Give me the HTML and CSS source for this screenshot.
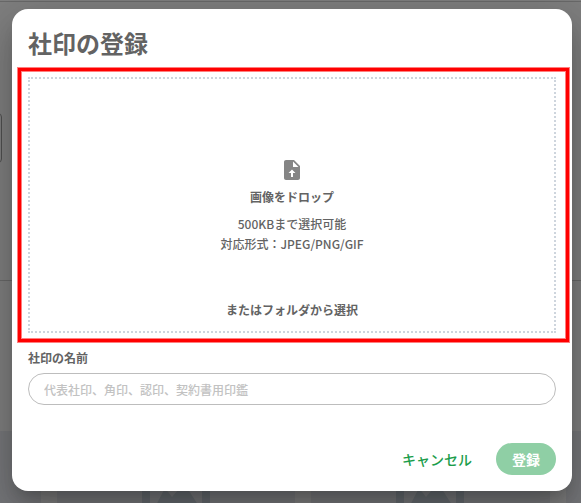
FILE: index.html
```html
<!DOCTYPE html>
<html lang="ja">
<head>
<meta charset="utf-8">
<title>社印の登録</title>
<link rel="stylesheet" href="styles.css">
</head>
<body>
<div class="page" aria-hidden="true">
  <div class="page-header"></div>
  <div class="page-body"><div class="page-button"></div></div>
  <div class="page-list">
    <div class="cards">
      <div class="card"></div>
      <div class="card"><svg class="thumb" viewBox="0 0 68 60"><path d="M0 0h68v60H0zM8 8v52h52V8z" fill-rule="evenodd"/><path d="M11 60L23 37l7 9L42 32l18 28z"/></svg></div>
      <div class="card"><svg class="thumb" viewBox="0 0 68 60"><path d="M0 0h68v60H0zM8 8v52h52V8z" fill-rule="evenodd"/><path d="M11 60L23 37l7 9L42 32l18 28z"/></svg></div>
      <div class="card"></div>
    </div>
  </div>
</div>
<div class="backdrop">
  <div class="dialog" role="dialog">
    <h1 class="title">社印の登録</h1>
    <div class="dropzone">
      <svg class="file-icon" viewBox="0 0 24 24"><path d="M14 2H6c-1.1 0-2 .9-2 2v16c0 1.1.9 2 2 2h12c1.1 0 2-.9 2-2V8l-6-6zm-1 7V3.500L18.500 9H13zM12 11.500L15.500 15H13v4h-2v-4H8.500z"/></svg>
      <p class="drop-title">画像をドロップ</p>
      <p class="drop-note">500KBまで選択可能<br>対応形式：JPEG/PNG/GIF</p>
      <p class="drop-pick">またはフォルダから選択</p>
      <div class="highlight"></div>
    </div>
    <label class="label" for="name">社印の名前</label>
    <input class="input" id="name" type="text" placeholder="代表社印、角印、認印、契約書用印鑑">
    <div class="actions">
      <button class="cancel">キャンセル</button>
      <button class="submit">登録</button>
    </div>
  </div>
</div>
</body>
</html>
```
FILE: styles.css
```css
* { box-sizing: border-box; }
body {
  margin: 0;
  height: 503px;
  overflow: hidden;
  position: relative;
  font-family: "Noto Sans CJK JP", sans-serif;
  color: #636363;
}
.page { height: 503px; display: flex; flex-direction: column; background: #fff; }
.page-header { height: 2px; border-bottom: 1px solid #d2d2d2; }
.page-body { height: 279px; padding-top: 111px; border-bottom: 1px solid #d2d2d2; }
.page-button {
  width: 12px;
  height: 50px;
  margin-left: -10px;
  border: 1px solid #a0a0a0;
  border-radius: 4px;
}
.page-list { padding-top: 150px; background: #fff; }
.cards { display: grid; grid-template-columns: 41px 238px 239px 15px; gap: 16px; height: 72px; }
.card { background: #eceff4; overflow: hidden; }
.thumb { display: block; width: 68px; height: 60px; margin: 20px 0 0 85px; fill: #cbd5de; }
.backdrop {
  position: absolute;
  inset: 0;
  padding: 9px 9px 12px 12px;
  background: rgba(0, 0, 0, .5);
}
.dialog {
  height: 482px;
  padding: 16px;
  border-radius: 16px;
  background: #fff;
  box-shadow: 0 11px 15px -7px rgba(0,0,0,.2), 0 24px 38px 3px rgba(0,0,0,.14), 0 9px 46px 8px rgba(0,0,0,.12);
}
.title { margin: 0 0 16px; font-size: 24px; line-height: 36px; font-weight: 700; }
.dropzone {
  position: relative;
  height: 256px;
  padding-top: 79px;
  border: 2px dotted #ced5dd;
  text-align: center;
  font-size: 12px;
  line-height: 20px;
  font-weight: 500;
}
.file-icon { display: block; width: 24px; height: 24px; margin: 0 auto; fill: #858585; }
.dropzone p { margin: 0; }
.dropzone .drop-title { padding-top: 5px; font-weight: 700; }
.dropzone .drop-note { margin-top: 7px; }
.dropzone .drop-pick { margin-top: 46px; font-weight: 700; }
.highlight {
  position: absolute;
  inset: -11px -15px -11px -12px;
  border: 3px solid #f00;
  box-shadow: 0 0 0 1px rgba(255,0,0,.5), inset 0 0 0 1px rgba(255,0,0,.5);
  pointer-events: none;
}
.label { display: block; margin-top: 15px; font-size: 12px; line-height: 20px; font-weight: 700; }
.input {
  display: block;
  width: 100%;
  height: 32px;
  margin-top: 5px;
  padding: 0 15px;
  border: 1px solid #bdbdbd;
  border-radius: 16px;
  background: #fff;
  font: 500 12px "Noto Sans CJK JP", sans-serif;
}
.input::placeholder { color: #c2c2c2; opacity: 1; }
.actions { display: flex; justify-content: flex-end; gap: 8px; margin-top: 38px; }
.actions button {
  height: 32px;
  padding: 0 16px;
  border: 0;
  border-radius: 16px;
  font: 500 14px/32px "Noto Sans CJK JP", sans-serif;
}
.actions .cancel { background: none; color: #1b9d4b; }
.actions .submit { background: #8fcfa5; color: #fff; font-weight: 700; }
```
